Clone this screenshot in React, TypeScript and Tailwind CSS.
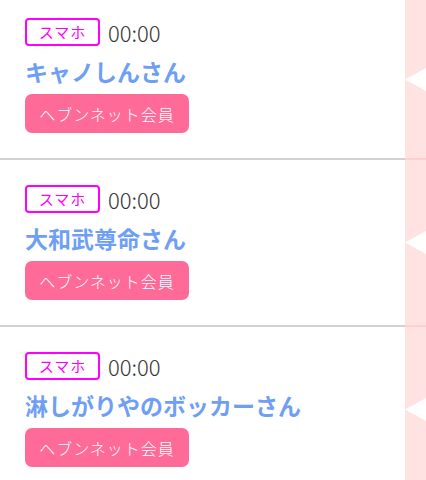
import React from 'react';

type Entry = { name: string; device: string; time: string; member: string };

const entries: Entry[] = [
  { name: 'キャノしんさん', device: 'スマホ', time: '00:00', member: 'ヘブンネット会員' },
  { name: '大和武尊命さん', device: 'スマホ', time: '00:00', member: 'ヘブンネット会員' },
  { name: '淋しがりやのボッカーさん', device: 'スマホ', time: '00:00', member: 'ヘブンネット会員' },
];

const Row: React.FC<{ entry: Entry; first: boolean }> = ({ entry, first }) => {
  return (
    <div className="flex">
      <div
        className={`flex-1 pl-[25px] pb-[25px] border-b-2 border-[#d2d2d2] ${first ? 'pt-[18px]' : 'pt-[25px]'}`}
      >
        <div className="flex items-center h-[28px]">
          <span className="h-[28px] w-[75px] flex items-center justify-center border-2 border-[#ff00ff] rounded-[4px] text-[#ff00ff] text-[15px] tracking-[0.06em]">
            {entry.device}
          </span>
          <span className="ml-[8px] text-[22px] font-light text-[#333333]">{entry.time}</span>
        </div>
        <p className="mt-[10px] leading-[30px] text-[23px] font-bold text-[#6f9ff5]">{entry.name}</p>
        <div className="mt-[8px]">
          <span className="inline-flex items-center justify-center h-[39px] w-[164px] rounded-[7px] bg-[#ff6b98] text-white text-[16px] font-light tracking-[0.06em]">
            {entry.member}
          </span>
        </div>
      </div>
      <div className="w-[21px] flex items-center bg-[#ffe2e2] border-b-2 border-[#ffd0d0]">
        <svg width="21" height="23" viewBox="0 0 21 23">
          <polygon points="0,11.5 21,0 21,23" fill="#ffffff" />
        </svg>
      </div>
    </div>
  );
};

const App: React.FC = () => {
  return (
    <div
      className="w-[426px] h-[480px] overflow-hidden bg-white"
      style={{ fontFamily: '"Noto Sans CJK JP", "Noto Sans", sans-serif' }}
    >
      {entries.map((entry, i) => (
        <Row key={i} entry={entry} first={i === 0} />
      ))}
    </div>
  );
};

export default App;
